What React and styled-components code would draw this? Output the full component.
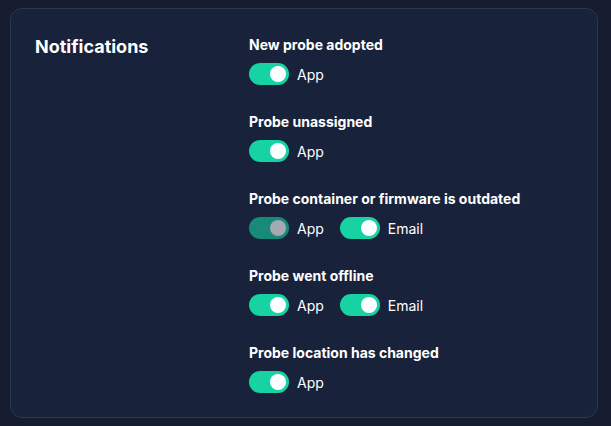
import React from 'react'
import styled, { createGlobalStyle } from 'styled-components'

const GlobalStyle = createGlobalStyle`
  html, body {
    margin: 0;
    padding: 0;
    background: #151d2e;
    font-family: Inter, "Noto Sans", sans-serif;
  }
`

const Page = styled.div`
  padding: 8px 13px 8px 10px;
`

const Card = styled.section`
  box-sizing: border-box;
  width: 588px;
  height: 410px;
  padding: 26px 24px 24px 24px;

  display: grid;
  grid-template-columns: 214px 1fr;
  align-items: start;

  background: #18223a;
  border: 1px solid #2b3853;
  border-radius: 12px;
`

const Title = styled.h2`
  margin: 2px 0 0;
  font-size: 18px;
  font-weight: 700;
  line-height: 20px;
  color: #ffffff;
`

const Settings = styled.div`
  display: flex;
  flex-direction: column;
  gap: 27px;
`

const Group = styled.div`
  display: flex;
  flex-direction: column;
  gap: 8px;
`

const Heading = styled.div`
  font-size: 14px;
  font-weight: 700;
  line-height: 20px;
  color: #ffffff;
`

const Options = styled.div`
  display: flex;
  gap: 16px;
`

const Option = styled.label`
  display: flex;
  align-items: center;
  gap: 8px;
  font-size: 14px;
  color: #ffffff;
`

const Track = styled.span`
  box-sizing: border-box;
  width: 40px;
  height: 22px;
  padding: 3px;
  border-radius: 11px;
  display: flex;
  justify-content: flex-end;
  background: ${p => (p.$disabled ? '#178a78' : '#17d3a3')};
`

const Knob = styled.span`
  width: 16px;
  height: 16px;
  border-radius: 50%;
  background: ${p => (p.$disabled ? '#a5a9b1' : '#ffffff')};
`

const groups = [
  { title: 'New probe adopted', options: [{ label: 'App' }] },
  { title: 'Probe unassigned', options: [{ label: 'App' }] },
  {
    title: 'Probe container or firmware is outdated',
    options: [{ label: 'App', disabled: true }, { label: 'Email' }],
  },
  { title: 'Probe went offline', options: [{ label: 'App' }, { label: 'Email' }] },
  { title: 'Probe location has changed', options: [{ label: 'App' }] },
]

function Toggle({ disabled }) {
  return (
    <Track $disabled={disabled}>
      <Knob $disabled={disabled} />
    </Track>
  )
}

export default function App() {
  return (
    <Page>
      <GlobalStyle />
      <Card>
        <Title>Notifications</Title>
        <Settings>
          {groups.map(g => (
            <Group key={g.title}>
              <Heading>{g.title}</Heading>
              <Options>
                {g.options.map(o => (
                  <Option key={o.label}>
                    <Toggle disabled={o.disabled} />
                    {o.label}
                  </Option>
                ))}
              </Options>
            </Group>
          ))}
        </Settings>
      </Card>
    </Page>
  )
}
